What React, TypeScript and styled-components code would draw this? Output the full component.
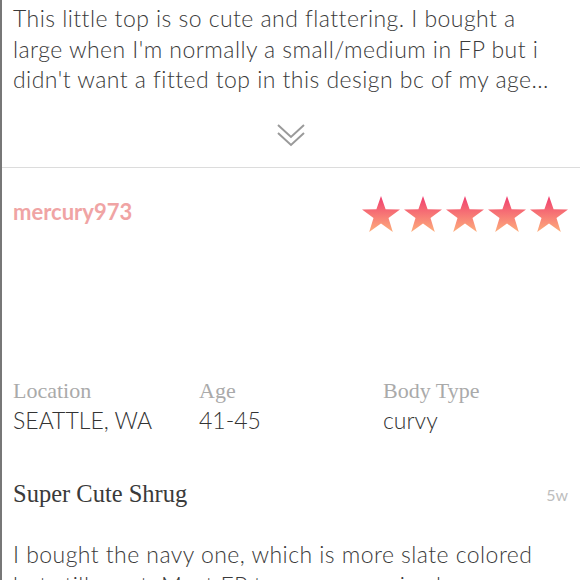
import React from "react";
import styled, { createGlobalStyle } from "styled-components";

const GlobalStyle = createGlobalStyle`
  html, body {
    margin: 0;
    padding: 0;
    background: #ffffff;
  }
  body {
    font-family: "Lato", "Liberation Sans", sans-serif;
  }
`;

const details = [
  { label: "Location", value: "SEATTLE, WA" },
  { label: "Age", value: "41-45" },
  { label: "Body Type", value: "curvy" },
];

const Star = ({ id }: { id: string }) => (
  <svg width="38" height="36" viewBox="0 0 38 36">
    <defs>
      <linearGradient id={id} x1="0" y1="0" x2="0" y2="1">
        <stop offset="0%" stopColor="#f03c6e" />
        <stop offset="100%" stopColor="#fdae7c" />
      </linearGradient>
    </defs>
    <path
      d="M19 0 L23.6 13.2 L38 13.4 L26.5 21.9 L30.8 36 L19 27.6 L7.2 36 L11.5 21.9 L0 13.4 L14.4 13.2 Z"
      fill={`url(#${id})`}
    />
  </svg>
);

const App = () => {
  return (
    <Page>
      <GlobalStyle />
      <PrevReview>
        <BodyText>
          This little top is so cute and flattering. I bought a<br />
          large when I'm normally a small/medium in FP but i<br />
          didn't want a fitted top in this design bc of my age...
        </BodyText>
        <Expand>
          <svg width="28" height="24" viewBox="0 0 28 24">
            <polyline points="1,1 14,13 27,1" fill="none" stroke="#9a9a9a" strokeWidth="2" />
            <polyline points="1,9 14,21 27,9" fill="none" stroke="#9a9a9a" strokeWidth="2" />
          </svg>
        </Expand>
      </PrevReview>

      <Review>
        <Header>
          <Username>mercury973</Username>
          <Stars>
            {[0, 1, 2, 3, 4].map((i) => (
              <Star key={i} id={`star-grad-${i}`} />
            ))}
          </Stars>
        </Header>

        <Details>
          {details.map((d) => (
            <Detail key={d.label}>
              <Label>{d.label}</Label>
              <Value>{d.value}</Value>
            </Detail>
          ))}
        </Details>

        <TitleRow>
          <Title>Super Cute Shrug</Title>
          <Age>5w</Age>
        </TitleRow>

        <ReviewBody>
          I bought the navy one, which is more slate colored<br />
          but still great. Most FP tops are oversized on me.
        </ReviewBody>
      </Review>
    </Page>
  );
};

export default App;

const Page = styled.div`
  width: 578px;
  height: 580px;
  border-left: 2px solid #777777;
  overflow: hidden;
  background: #ffffff;
`;

const PrevReview = styled.section`
  padding: 3px 0 0 11px;
  border-bottom: 1px solid #dcdcdc;
  height: 168px;
  box-sizing: border-box;
  display: flex;
  flex-direction: column;
`;

const BodyText = styled.p`
  margin: 0;
  white-space: nowrap;
  font-family: "Lato", "Liberation Sans", sans-serif;
  font-size: 23px;
  line-height: 30.5px;
  letter-spacing: 0.45px;
  color: #3a3a3a;
  font-weight: 300;
`;

const ReviewBody = styled(BodyText)`
  margin-top: 29px;
`;

const Expand = styled.div`
  display: flex;
  justify-content: center;
  margin-top: 29px;
  padding-right: 11px;
`;

const Review = styled.section`
  padding: 31px 0 0 11px;
`;

const Header = styled.div`
  display: flex;
  justify-content: space-between;
  align-items: flex-start;
  padding-right: 12px;
`;

const Username = styled.div`
  font-family: "Lato", "Liberation Sans", sans-serif;
  font-size: 22px;
  font-weight: 700;
  color: #f0a4a4;
  line-height: 26px;
`;

const Stars = styled.div`
  display: flex;
  gap: 4px;
  margin-top: -3px;
`;

const Details = styled.div`
  display: grid;
  grid-template-columns: 186px 184px 1fr;
  margin-top: 145px;
`;

const Detail = styled.div`
  display: flex;
  flex-direction: column;
`;

const Label = styled.span`
  font-family: "Liberation Serif", "DejaVu Serif", serif;
  font-size: 22px;
  line-height: 28px;
  color: #aaaaaa;
`;

const Value = styled.span`
  font-family: "Lato", "Liberation Sans", sans-serif;
  font-size: 23px;
  font-weight: 300;
  line-height: 30px;
  color: #333333;
`;

const TitleRow = styled.div`
  display: flex;
  justify-content: space-between;
  align-items: center;
  margin-top: 43px;
  padding-right: 12px;
`;

const Title = styled.h2`
  margin: 0;
  font-family: "Liberation Serif", "DejaVu Serif", serif;
  font-size: 24.5px;
  line-height: 32px;
  font-weight: 400;
  color: #3a3a3a;
`;

const Age = styled.span`
  font-family: "Lato", "Liberation Sans", sans-serif;
  font-size: 16px;
  color: #bdbdbd;
`;
